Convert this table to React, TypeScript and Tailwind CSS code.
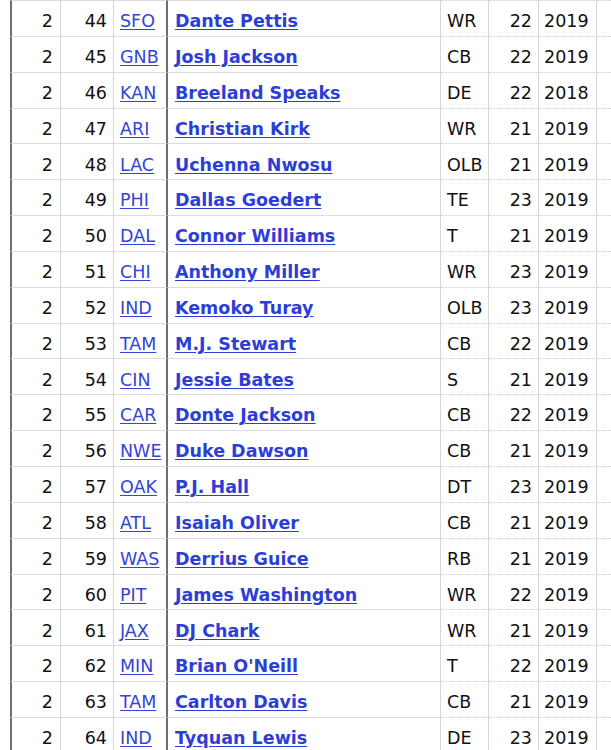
import React from "react";

const rows: [string, string, string, string, string, string][] = [
  ["44", "SFO", "Dante Pettis", "WR", "22", "2019"],
  ["45", "GNB", "Josh Jackson", "CB", "22", "2019"],
  ["46", "KAN", "Breeland Speaks", "DE", "22", "2018"],
  ["47", "ARI", "Christian Kirk", "WR", "21", "2019"],
  ["48", "LAC", "Uchenna Nwosu", "OLB", "21", "2019"],
  ["49", "PHI", "Dallas Goedert", "TE", "23", "2019"],
  ["50", "DAL", "Connor Williams", "T", "21", "2019"],
  ["51", "CHI", "Anthony Miller", "WR", "23", "2019"],
  ["52", "IND", "Kemoko Turay", "OLB", "23", "2019"],
  ["53", "TAM", "M.J. Stewart", "CB", "22", "2019"],
  ["54", "CIN", "Jessie Bates", "S", "21", "2019"],
  ["55", "CAR", "Donte Jackson", "CB", "22", "2019"],
  ["56", "NWE", "Duke Dawson", "CB", "21", "2019"],
  ["57", "OAK", "P.J. Hall", "DT", "23", "2019"],
  ["58", "ATL", "Isaiah Oliver", "CB", "21", "2019"],
  ["59", "WAS", "Derrius Guice", "RB", "21", "2019"],
  ["60", "PIT", "James Washington", "WR", "22", "2019"],
  ["61", "JAX", "DJ Chark", "WR", "21", "2019"],
  ["62", "MIN", "Brian O'Neill", "T", "22", "2019"],
  ["63", "TAM", "Carlton Davis", "CB", "21", "2019"],
  ["64", "IND", "Tyquan Lewis", "DE", "23", "2019"],
];

export default function App() {
  return (
    <div
      className="w-[611px] h-[750px] overflow-hidden bg-white text-[17.5px] text-[#111]"
      style={{ fontFamily: '"DejaVu Sans", Verdana, sans-serif' }}
    >
      {rows.map(([pick, team, name, pos, age, year], i) => (
        <div
          key={i}
          className="grid grid-cols-[10px_51px_53px_54px_273px_48px_50px_58px_1fr] h-[35.85px] leading-none"
        >
          <div />
          <div className="border-l-2 border-l-[#6f6f6f] border-t border-t-[#dcdcdc] border-r border-r-[#d6d6d6] flex items-center justify-end pr-[7px] pt-[7px]">
            2
          </div>
          <div className="border-t border-t-[#dcdcdc] border-r border-r-[#d6d6d6] flex items-center justify-end pr-[6px] pt-[7px]">
            {pick}
          </div>
          <div className="border-t border-t-[#dcdcdc] border-r-2 border-r-[#6f6f6f] flex items-center pl-[6px] pt-[7px]">
            <a href="#" className="text-[#3344d6] underline underline-offset-2">
              {team}
            </a>
          </div>
          <div className="border-t border-t-[#dcdcdc] border-r border-r-[#d6d6d6] flex items-center pl-[7px] pt-[7px]">
            <a href="#" className="text-[#2d3ed6] font-bold underline underline-offset-2">
              {name}
            </a>
          </div>
          <div className="border-t border-t-[#cfcfcf] [border-top-style:dotted] border-r border-r-[#d6d6d6] flex items-center pl-[6px] pt-[7px]">
            {pos}
          </div>
          <div className="border-t border-t-[#cfcfcf] [border-top-style:dotted] border-r border-r-[#d6d6d6] flex items-center justify-end pr-[6px] pt-[7px]">
            {age}
          </div>
          <div className="border-t border-t-[#cfcfcf] [border-top-style:dotted] border-r border-r-[#d6d6d6] flex items-center pl-[5px] pt-[7px]">
            {year}
          </div>
          <div className="border-t border-t-[#cfcfcf] [border-top-style:dotted]" />
        </div>
      ))}
    </div>
  );
}
